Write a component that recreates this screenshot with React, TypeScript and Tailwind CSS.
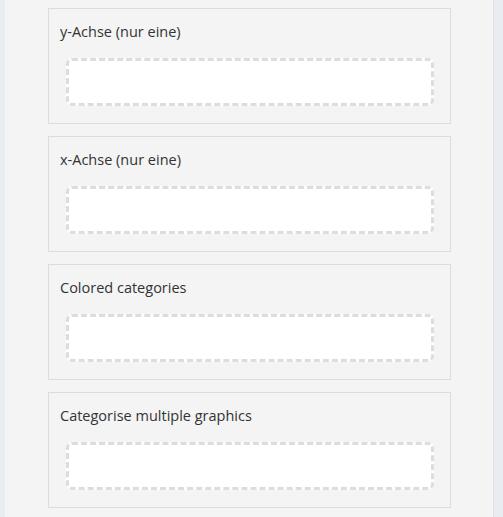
const fields = ['y-Achse (nur eine)', 'x-Achse (nur eine)', 'Colored categories', 'Categorise multiple graphics'];

export default function App() {
  return (
    <div className="flex h-[517px] w-[503px] overflow-hidden bg-[#e9edf2] font-['Open_Sans',sans-serif]">
      <div className="w-[5px] shrink-0" />
      <div className="w-[489px] shrink-0 border-r border-[#dfe3e8] bg-[#f4f4f4] pl-[43px] pt-[8px]">
        <div className="flex w-[403px] flex-col gap-[12px]">
          {fields.map((label) => (
            <div key={label} className="h-[116px] border border-[#dcdcdc] bg-[#f4f4f4] px-[11px] pt-[13px]">
              <div className="text-[14.5px] leading-[20px] text-[#333]">{label}</div>
              <div className="ml-[6px] mt-[16px] h-[48px] w-[368px] rounded-[6px] border-[3px] border-dashed border-[#dddddd] bg-white" />
            </div>
          ))}
        </div>
      </div>
    </div>
  );
}
